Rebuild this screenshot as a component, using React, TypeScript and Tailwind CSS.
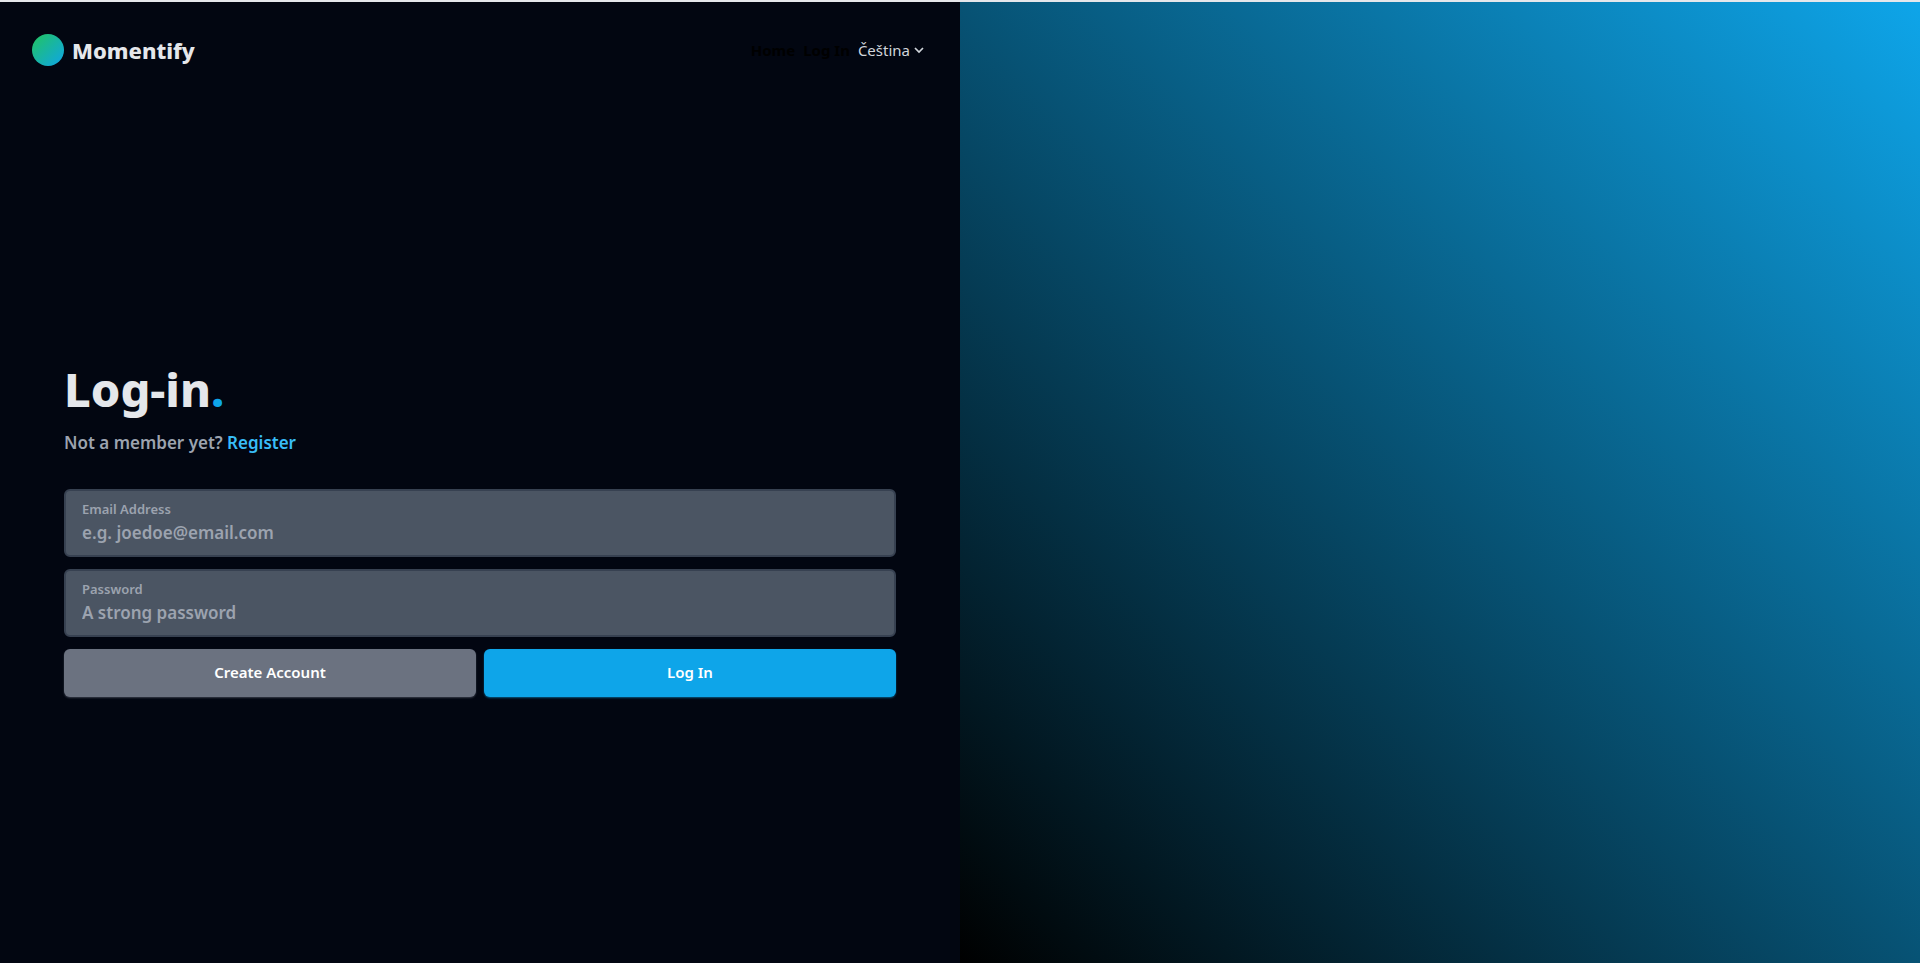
const navLink = "font-bold text-black";

function Field({ id, label, type, placeholder }: { id: string; label: string; type: string; placeholder: string }) {
  return (
    <div className="flex h-17 flex-col rounded-md border-2 border-[#374151] bg-[#4b5563] px-4 pt-2 font-semibold">
      <label htmlFor={id} className="text-[13px] leading-5 text-[#9ca3af]">
        {label}
      </label>
      <input
        id={id}
        type={type}
        placeholder={placeholder}
        className="w-full bg-transparent text-[17px] leading-7 text-[#e5e7eb] outline-none placeholder:text-[#9ca3af]"
      />
    </div>
  );
}

export default function App() {
  return (
    <div className="grid min-h-screen grid-cols-2 border-t-2 border-[#e5e7eb] bg-[#020611] font-['Noto_Sans',sans-serif] text-[#e5e7eb]">
      <div className="flex flex-col">
        <header className="flex items-center justify-between p-8">
          <a href="#" className="flex items-center gap-2">
            <span className="size-8 rounded-full bg-[linear-gradient(to_bottom_right,#22c55e,#0ea5e9)]" />
            <span className="text-[22px] leading-8 font-extrabold">Momentify</span>
          </a>
          <nav className="flex items-center gap-2 text-[15px] leading-6">
            <a href="#" className={navLink}>Home</a>
            <a href="#" className={navLink}>Log In</a>
            <button type="button" className="flex items-center gap-0.5 text-[#d1d5db]">
              Čeština
              <svg viewBox="0 0 16 16" className="size-4" fill="none" stroke="currentColor" strokeWidth="1.7">
                <path d="M3 6l4 4 4-4" />
              </svg>
            </button>
          </nav>
        </header>
        <main className="flex grow flex-col justify-center px-16">
          <h1 className="text-[47px] leading-12 font-extrabold">
            Log-in<span className="text-[#0ea5e9]">.</span>
          </h1>
          <p className="mt-4 text-[17px] leading-7 font-semibold text-[#9ca3af]">
            Not a member yet? <a href="#" className="text-[#38bdf8]">Register</a>
          </p>
          <form className="mt-8 flex flex-col gap-3">
            <Field id="email" label="Email Address" type="email" placeholder="e.g. joedoe@email.com" />
            <Field id="password" label="Password" type="password" placeholder="A strong password" />
            <div className="grid grid-cols-2 gap-2 text-[15px] font-semibold text-white">
              <button type="button" className="h-12 rounded-md bg-[#6b7280] shadow-[0_1px_2px_#6b728080]">Create Account</button>
              <button type="submit" className="h-12 rounded-md bg-[#0ea5e9] shadow-[0_1px_2px_#0ea5e980]">Log In</button>
            </div>
          </form>
        </main>
      </div>
      <div className="bg-[linear-gradient(to_top_right,#000,#0ea5e9)]" />
    </div>
  );
}
